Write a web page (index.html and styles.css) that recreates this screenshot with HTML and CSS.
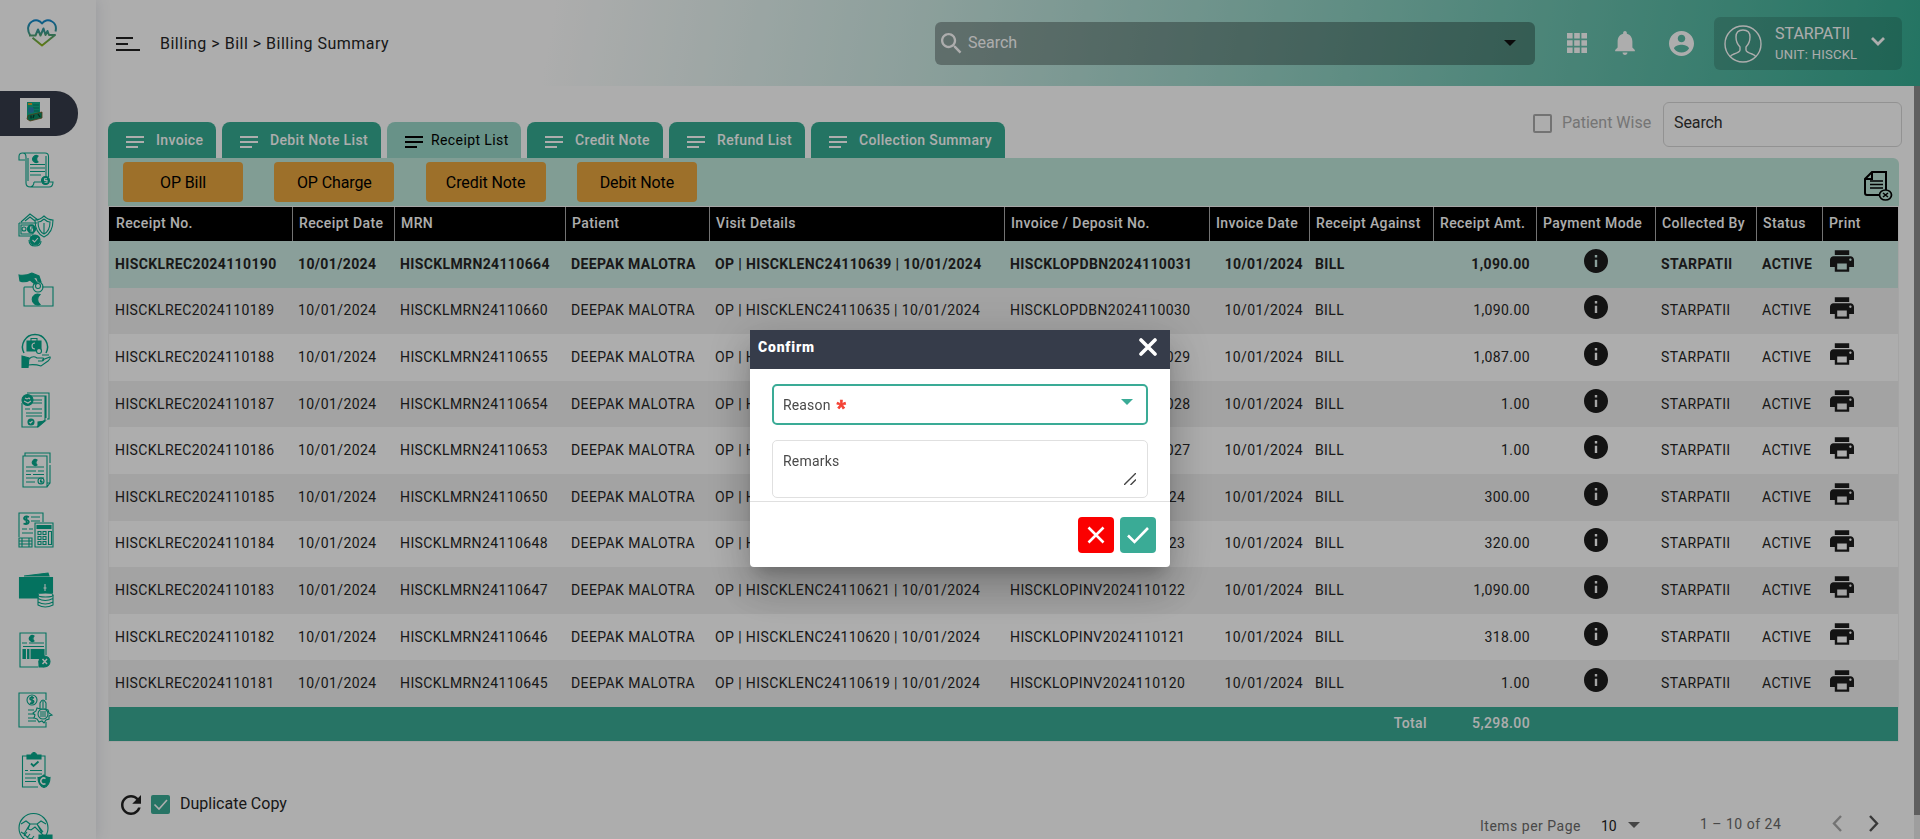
FILE: index.html
```html
<!DOCTYPE html>
<html lang="en">
<head>
<meta charset="utf-8">
<title>Billing Summary</title>
<link rel="stylesheet" href="styles.css">
</head>
<body>
<svg class="defs" aria-hidden="true">
  <defs>
    <linearGradient id="heart" x1="0" y1="0" x2="0" y2="1"><stop offset="0" stop-color="#1389cf"/><stop offset=".5" stop-color="#3f9c8c"/><stop offset="1" stop-color="#8fb51c"/></linearGradient>
  </defs>
  <symbol id="lines" viewBox="0 0 18 12"><path d="M0 0h18v2H0zM0 5h18v2H0zM0 10h12v2H0z"/></symbol>
  <symbol id="info" viewBox="2 2 20 20"><path d="M12 2C6.48 2 2 6.48 2 12s4.48 10 10 10 10-4.480 10-10S17.520 2 12 2zm1 15h-2v-6h2v6zm0-8h-2V7h2v2z"/></symbol>
  <symbol id="print" viewBox="2 3 20 18"><path d="M19 8H5c-1.660 0-3 1.340-3 3v6h4v4h12v-4h4v-6c0-1.660-1.340-3-3-3zm-3 11H8v-5h8v5zm3-7c-.55 0-1-.45-1-1s.45-1 1-1 1 .45 1 1-.45 1-1 1zm-1-9H6v4h12V3z"/></symbol>
</svg>

<aside class="sidebar">
  <svg class="logo" viewBox="0 0 30 28" fill="none" stroke="url(#heart)" stroke-width="2" stroke-linejoin="round"><path d="M3 16C0 11 .5 5 5 2.500 9 0 13 1.500 15 4.500 17 1.500 21 0 25 2.500c3.500 2 4.500 6 3.500 10M2 16.500h6.500l2.500-6 2.500 6 3-7 2 6.500 2-4 1.500 4H28L15 26.500 5.500 18.800"/></svg>
  <div class="side-active"><div class="side-tile">
    <svg viewBox="0 0 30 30"><path d="M7 4h13v16H7z" fill="#0fae8c"/><path d="M8 5h4v2H8z" fill="#d5a22c"/><path d="M13 7h6M13 10h6M14 13h5" stroke="#087c67"/><circle cx="11" cy="12" r="3" fill="#2a85b5"/><path d="M8 17.500L22 14v6l-12 3-3-2z" fill="#0a8b63" stroke="#77551f" stroke-width=".8"/><path d="M11 17.500v3M14 17l-1 3M18 16l2 3" stroke="#063f31" stroke-width="1.300"/></svg>
  </div></div>
  <nav class="side-nav">
    <svg viewBox="0 0 36 36"><path d="M7 8H1V4.500Q1 1 4.500 1H27q3.500 0 3.500 3.500V25M4.500 1Q8 1 8 5v26q0 4 4.500 4H31q4 0 4-5h-3M16 30H23M16 30q0 5-5 5M10 6v23M28 4v21"/><path d="M12 12.500h15M12 16h15M12 19.500h15M12 23h11"/><path class="f" d="M20 4a3.500 3.500 0 1 0 0 6 4 4 0 0 1 0-6z"/><circle class="f" cx="27.500" cy="28.500" r="4"/><path class="w" d="M29 26.800h-2.500v1.700H29v1.700h-2.500"/></svg>
    <svg viewBox="0 0 36 36"><path d="M1 11h18M1 11v13h12M3 13h12v9H3zM3 10l9-8 8 6M7 9l5-4 5 4"/><circle cx="6" cy="17" r="2"/><circle class="f" cx="13.500" cy="17" r="4"/><path class="w" d="M14.500 15h-2v2h2v2h-2"/><path d="M26 4q4 4 9 4 0 13-9 17-9-4-9-17 5 0 9-4zM26 7q3 3 6 3 0 9-6 12-6-3-6-12 3 0 6-3M26 11v11"/><circle class="f" cx="17" cy="28" r="5"/><path d="M11 28q0 6 6 6t6-5"/><path class="w" d="M14.500 28l2 2 3.500-4"/></svg>
    <svg viewBox="0 0 36 36"><path class="f" d="M1 3q7 1 13-2l7 3 2 6-3-1-1-3-4-1 4 6-2 1-5-4Q7 11 2 9z"/><path d="M15 15H6.500Q6 15 6 16v18h29V15H24"/><circle cx="20" cy="15" r="5"/><circle cx="20" cy="14" r="2.500"/><path class="f" d="M22 22.500a5.500 5.500 0 1 0 0 10 6.500 6.500 0 0 1 0-10z"/></svg>
    <svg viewBox="0 0 36 36"><path stroke-width="1.500" d="M6 21A12.500 12.500 0 1 1 28 21"/><path class="f" d="M9 9h14v10H9z"/><path d="M13 9V6.500h6V9"/><path class="w" d="M17 11a3 3 0 1 0 0 6"/><circle cx="21" cy="19" r="2.500" fill="#fff"/><path class="f" d="M4 24l7 2-1 10H4z"/><path d="M11 27q4-4 8-1h6q2 2-1 3h-4M24 28l8-3q1 1-2 4l-7 5q-6-2-13-1M24 23h7"/></svg>
    <svg viewBox="0 0 36 36"><path d="M9 1h22v26h-2M12 4h16v22M4 11v24h15l8-7V4M12 8h12M14 11h10M7 17h5M14 17h10M8 21h16M8 24h16"/><circle class="f" cx="9.500" cy="8" r="5.500"/><path class="w" d="M7 6l2 1 2-1 1 1M6 9l4 2 3-2"/><circle class="f" cx="13" cy="30" r="3"/><path class="w" d="M11.500 30l1 1 2-2"/><path class="f" d="M20 35v-5l7-1z"/></svg>
    <svg viewBox="0 0 36 36"><path d="M7 4V1h25v10M32 13v18h-3M5 4h24v31H5zM32 31l-3 4M8 15h18M8 19h10M20 19h6M8 22.500h5M15 22.500h11M8 26h18M8 30h9"/><path class="f" d="M19 8a3 3 0 1 0 0 5 3.500 3.500 0 0 1 0-5z"/><circle cx="23" cy="29" r="3"/><path d="M24 28h-1.500v1.500H24V31h-2"/></svg>
    <svg viewBox="0 0 36 36"><path d="M25 10V1H1v24M13 5h9M13 9h9M4 17h5M11 17h4M4 21h11M17 11h18v24H17zM1 26h13v9H1zM1 29h13M1 32h13M4 26v9M11 26v9"/><path stroke-width="1.800" d="M11 5q-4-1.500-5 1 0 2 3 2 3 1 1 3.500-2 1-4.500 0M8.500 3.500v9"/><path class="f" d="M19 13.500h14v3H19z"/><path d="M20 19.500h3v3h-3zM25 19.500h3v3h-3zM20 24.500h3v3h-3zM25 24.500h3v3h-3zM20 29.500h3v3h-3zM25 29.500h3v3h-3zM30.500 19.500h3v13h-3z"/></svg>
    <svg viewBox="0 0 36 36"><path class="f" d="M6 4L30 1l1 3zM1.500 5.500h33V21H20v5H1.500z"/><path class="w" d="M27 12v7M25.500 16h3"/><ellipse cx="27.500" cy="23" rx="7.500" ry="2" fill="#fff"/><path d="M20 23v10q7 4 15 0V23M20 26.500q7 4 15 0M20 30q7 4 15 0"/></svg>
    <svg viewBox="0 0 36 36"><path d="M28 23V1H2v34h18M4 11h5M11 11h15M5 14.500h21"/><path class="f" d="M5 17.500h21v3H5zM5 21.500h21v5H5z"/><path class="w" d="M8.500 17v10M12 17v10"/><path class="f" d="M16 4a3 3 0 1 0 0 5 3.500 3.500 0 0 1 0-5z"/><circle class="f" cx="26.500" cy="29.500" r="5.500"/><path class="w" stroke-width="1.500" d="M24.500 27l4.500 5M29 27l-4.500 5"/><path class="f" d="M21 30v5h4z"/></svg>
    <svg viewBox="0 0 36 36"><path d="M28 8V1H1v34h27v-5M10 18h6M10 22h6M10 26h6M10 29h8"/><circle cx="14" cy="8" r="5"/><path stroke-width="1.500" d="M16 6q-4-1.500-4 .5 0 1.500 2 1.500 3 1 1 3-1.500.5-3 0M14 4v8"/><path d="M22 17v-6q3-6 6 0v6M25 9v7M22 17l-3-1-1 3-3 2 2 2-1 3 3 1 2 3 3-1 2 2 2-3 3-1v-3l3-1-3-2-1-3-3-1z"/><circle cx="25" cy="22" r="5"/><path d="M22 20h6M22 22h6M22 24h6"/></svg>
    <svg viewBox="0 0 36 36"><path d="M11 4H4.500v31H20M21 4h6v19M7 18.500h3M12 18.500h12M7 22h17M7 26h11M7 29.500h11"/><path class="f" d="M9 3h4q3-5 6 0h4v4H9z"/><path stroke-width="1.800" d="M13 11.500l2.500 2.500 5-4.500"/><path class="f" d="M26 23q3 3 6 2.500 0 8-6 10-6-2-6-10 3 .5 6-2.500z"/><path class="w" stroke-width="1.500" d="M27.500 26.500a3 3 0 1 0 0 5"/></svg>
    <svg viewBox="0 0 36 36"><circle cx="15.500" cy="16" r="14.500"/><path d="M3 12l5-3 4 3-6 10-3-2M28 12l-5-3-4 3 6 8M12 12l7 0 5 9M12 12l-2 5 3 1 4-3 8 8-2 2M5 21l5 5 4 1 5 2 3-3M9 20l-3 4M12 22l-3 4M16 24l-3 4"/><path class="f" d="M21 23h13v9H21z"/></svg>
  </nav>
</aside>

<div class="main">
  <header class="topbar">
    <svg class="menu" viewBox="0 0 24 14"><path d="M0 0h17v2H0zM0 6h12v2H0zM0 12h24v2H0z"/></svg>
    <div class="crumbs">Billing &gt; Bill &gt; Billing Summary</div>
    <div class="global-search">
      <svg class="mag" viewBox="3 3 18 18"><path d="M15.500 14h-.79l-.28-.27C15.410 12.590 16 11.110 16 9.500 16 5.910 13.090 3 9.500 3S3 5.910 3 9.500 5.910 16 9.500 16c1.610 0 3.090-.59 4.230-1.570l.27.28v.79l5 4.990L20.490 19l-4.990-5zm-6 0C7.010 14 5 11.990 5 9.500S7.010 5 9.500 5 14 7.010 14 9.500 11.990 14 9.500 14z"/></svg>
      <span>Search</span><i class="caret"></i>
    </div>
    <svg class="apps" viewBox="0 0 20 20"><path d="M0 0h5.600v5.600H0zM7.200 0h5.600v5.600H7.200zM14.400 0H20v5.600h-5.600zM0 7.200h5.600v5.600H0zM7.200 7.200h5.600v5.600H7.200zM14.400 7.200H20v5.600h-5.600zM0 14.400h5.600V20H0zM7.200 14.400h5.600V20H7.200zM14.400 14.400H20V20h-5.600z"/></svg>
    <svg class="bell" viewBox="4 2.500 16 19.500"><path d="M12 22c1.100 0 2-.9 2-2h-4c0 1.100.89 2 2 2zm6-6v-5c0-3.070-1.640-5.640-4.500-6.320V4c0-.83-.67-1.500-1.500-1.500s-1.500.67-1.500 1.500v.68C7.630 5.360 6 7.920 6 11v5l-2 2v1h16v-1l-2-2z"/></svg>
    <svg class="account" viewBox="2 2 20 20"><path d="M12 2C6.480 2 2 6.480 2 12s4.480 10 10 10 10-4.480 10-10S17.520 2 12 2zm0 3c1.660 0 3 1.340 3 3s-1.340 3-3 3-3-1.340-3-3 1.340-3 3-3zm0 14.200c-2.500 0-4.710-1.280-6-3.220.03-1.990 4-3.080 6-3.080 1.990 0 5.970 1.090 6 3.080-1.290 1.940-3.500 3.220-6 3.220z"/></svg>
    <div class="user">
      <svg class="avatar" viewBox="0 0 38 38"><circle cx="19" cy="19" r="18"/><path d="M6 32q1-2 4-3 6-2 6-4v-3q-4-4-4-10 0-7 7-7t7 7q0 6-4 10v3q0 2 6 4 3 1 4 3"/></svg>
      <div class="user-text"><div class="user-name">STARPATIl</div><div class="user-unit">UNIT: HISCKL</div></div>
      <svg class="chev" viewBox="0 0 14 9"><path d="M1 1l6 6 6-6"/></svg>
    </div>
  </header>

  <div class="body">
    <div class="content">
      <div class="tab-row">
        <div class="tabs">
          <div class="tab w1"><svg><use href="#lines"/></svg>Invoice</div>
          <div class="tab w2"><svg><use href="#lines"/></svg>Debit Note List</div>
          <div class="tab w3 active"><svg><use href="#lines"/></svg>Receipt List</div>
          <div class="tab w4"><svg><use href="#lines"/></svg>Credit Note</div>
          <div class="tab w5"><svg><use href="#lines"/></svg>Refund List</div>
          <div class="tab w6"><svg><use href="#lines"/></svg>Collection Summary</div>
        </div>
        <div class="filter"><span class="box"></span><span class="patient">Patient Wise</span><div class="field">Search</div></div>
      </div>
      <div class="toolbar">
        <div class="btn">OP Bill</div><div class="btn">OP Charge</div><div class="btn">Credit Note</div><div class="btn">Debit Note</div>
        <svg class="report" viewBox="0 0 29 30"><path stroke-width="2" d="M8 1h14v18M16 24H3q-2 0-2-2V8l7-7v7H1"/><path stroke-width="1.600" d="M6 10h13M6 13.500h13M6 17h13"/><ellipse cx="21.500" cy="24" rx="6" ry="5" stroke-width="1.700"/><path stroke-width="1.600" d="M19 22l5 4M24 22l-5 4"/></svg>
      </div>
      <table class="grid">
        <colgroup><col class="c1"><col class="c2"><col class="c3"><col class="c4"><col class="c5"><col class="c6"><col class="c7"><col class="c8"><col class="c9"><col class="c10"><col class="c11"><col class="c12"><col class="c13"></colgroup>
        <thead><tr><th>Receipt No.</th><th>Receipt Date</th><th>MRN</th><th>Patient</th><th>Visit Details</th><th>Invoice / Deposit No.</th><th>Invoice Date</th><th>Receipt Against</th><th>Receipt Amt.</th><th>Payment Mode</th><th>Collected By</th><th>Status</th><th>Print</th></tr></thead>
        <tbody>
          <tr class="selected"><td>HISCKLREC2024110190</td><td>10/01/2024</td><td>HISCKLMRN24110664</td><td>DEEPAK MALOTRA</td><td>OP | HISCKLENC24110639 | 10/01/2024</td><td>HISCKLOPDBN2024110031</td><td class="r">10/01/2024</td><td>BILL</td><td class="r">1,090.00</td><td class="mid"><svg class="info"><use href="#info"/></svg></td><td>STARPATIl</td><td>ACTIVE</td><td><svg class="print"><use href="#print"/></svg></td></tr>
          <tr><td>HISCKLREC2024110189</td><td>10/01/2024</td><td>HISCKLMRN24110660</td><td>DEEPAK MALOTRA</td><td>OP | HISCKLENC24110635 | 10/01/2024</td><td>HISCKLOPDBN2024110030</td><td class="r">10/01/2024</td><td>BILL</td><td class="r">1,090.00</td><td class="mid"><svg class="info"><use href="#info"/></svg></td><td>STARPATIl</td><td>ACTIVE</td><td><svg class="print"><use href="#print"/></svg></td></tr>
          <tr><td>HISCKLREC2024110188</td><td>10/01/2024</td><td>HISCKLMRN24110655</td><td>DEEPAK MALOTRA</td><td>OP | HISCKLENC24110630 | 10/01/2024</td><td>HISCKLOPDBN2024110029</td><td class="r">10/01/2024</td><td>BILL</td><td class="r">1,087.00</td><td class="mid"><svg class="info"><use href="#info"/></svg></td><td>STARPATIl</td><td>ACTIVE</td><td><svg class="print"><use href="#print"/></svg></td></tr>
          <tr><td>HISCKLREC2024110187</td><td>10/01/2024</td><td>HISCKLMRN24110654</td><td>DEEPAK MALOTRA</td><td>OP | HISCKLENC24110629 | 10/01/2024</td><td>HISCKLOPDBN2024110028</td><td class="r">10/01/2024</td><td>BILL</td><td class="r">1.00</td><td class="mid"><svg class="info"><use href="#info"/></svg></td><td>STARPATIl</td><td>ACTIVE</td><td><svg class="print"><use href="#print"/></svg></td></tr>
          <tr><td>HISCKLREC2024110186</td><td>10/01/2024</td><td>HISCKLMRN24110653</td><td>DEEPAK MALOTRA</td><td>OP | HISCKLENC24110628 | 10/01/2024</td><td>HISCKLOPDBN2024110027</td><td class="r">10/01/2024</td><td>BILL</td><td class="r">1.00</td><td class="mid"><svg class="info"><use href="#info"/></svg></td><td>STARPATIl</td><td>ACTIVE</td><td><svg class="print"><use href="#print"/></svg></td></tr>
          <tr><td>HISCKLREC2024110185</td><td>10/01/2024</td><td>HISCKLMRN24110650</td><td>DEEPAK MALOTRA</td><td>OP | HISCKLENC24110625 | 10/01/2024</td><td>HISCKLOPINV2024110124</td><td class="r">10/01/2024</td><td>BILL</td><td class="r">300.00</td><td class="mid"><svg class="info"><use href="#info"/></svg></td><td>STARPATIl</td><td>ACTIVE</td><td><svg class="print"><use href="#print"/></svg></td></tr>
          <tr><td>HISCKLREC2024110184</td><td>10/01/2024</td><td>HISCKLMRN24110648</td><td>DEEPAK MALOTRA</td><td>OP | HISCKLENC24110622 | 10/01/2024</td><td>HISCKLOPINV2024110123</td><td class="r">10/01/2024</td><td>BILL</td><td class="r">320.00</td><td class="mid"><svg class="info"><use href="#info"/></svg></td><td>STARPATIl</td><td>ACTIVE</td><td><svg class="print"><use href="#print"/></svg></td></tr>
          <tr><td>HISCKLREC2024110183</td><td>10/01/2024</td><td>HISCKLMRN24110647</td><td>DEEPAK MALOTRA</td><td>OP | HISCKLENC24110621 | 10/01/2024</td><td>HISCKLOPINV2024110122</td><td class="r">10/01/2024</td><td>BILL</td><td class="r">1,090.00</td><td class="mid"><svg class="info"><use href="#info"/></svg></td><td>STARPATIl</td><td>ACTIVE</td><td><svg class="print"><use href="#print"/></svg></td></tr>
          <tr><td>HISCKLREC2024110182</td><td>10/01/2024</td><td>HISCKLMRN24110646</td><td>DEEPAK MALOTRA</td><td>OP | HISCKLENC24110620 | 10/01/2024</td><td>HISCKLOPINV2024110121</td><td class="r">10/01/2024</td><td>BILL</td><td class="r">318.00</td><td class="mid"><svg class="info"><use href="#info"/></svg></td><td>STARPATIl</td><td>ACTIVE</td><td><svg class="print"><use href="#print"/></svg></td></tr>
          <tr><td>HISCKLREC2024110181</td><td>10/01/2024</td><td>HISCKLMRN24110645</td><td>DEEPAK MALOTRA</td><td>OP | HISCKLENC24110619 | 10/01/2024</td><td>HISCKLOPINV2024110120</td><td class="r">10/01/2024</td><td>BILL</td><td class="r">1.00</td><td class="mid"><svg class="info"><use href="#info"/></svg></td><td>STARPATIl</td><td>ACTIVE</td><td><svg class="print"><use href="#print"/></svg></td></tr>
        </tbody>
        <tfoot><tr><td colspan="7"></td><td class="r">Total</td><td class="r">5,298.00</td><td colspan="4"></td></tr></tfoot>
      </table>
      <div class="footer">
        <div class="copy">
          <svg class="refresh" viewBox="4 4 16 16"><path d="M17.650 6.350C16.200 4.900 14.210 4 12 4c-4.420 0-7.990 3.580-7.990 8s3.570 8 7.990 8c3.730 0 6.840-2.550 7.730-6h-2.080c-.82 2.330-3.040 4-5.650 4-3.310 0-6-2.690-6-6s2.690-6 6-6c1.660 0 3.140.69 4.220 1.780L13 11h7V4l-2.350 2.350z"/></svg>
          <svg class="checked" viewBox="0 0 19 19"><rect width="19" height="19" rx="2"/><path d="M3.500 9.500l4.500 4.500 8-9"/></svg>
          <span>Duplicate Copy</span>
        </div>
        <div class="pager">
          <span class="ipp">Items per Page</span><span class="ten">10</span><i class="caret grey"></i><span class="range">1 – 10 of 24</span>
          <svg class="prev" viewBox="0 0 10 17"><path d="M9 1L2 8.500 9 16"/></svg><svg class="next" viewBox="0 0 10 17"><path d="M1 1l7 7.500L1 16"/></svg>
        </div>
      </div>
    </div>
    <div class="scroll"><div class="thumb"></div></div>
  </div>
</div>

<div class="backdrop">
  <div class="modal">
    <div class="modal-head"><span>Confirm</span><svg viewBox="0 0 18 18"><path d="M2 2l14 14M16 2L2 16"/></svg></div>
    <div class="modal-body">
      <div class="reason"><span>Reason</span><b>*</b><i class="caret green"></i></div>
      <div class="remarks"><span>Remarks</span><svg viewBox="0 0 12 12"><path d="M0 12L12 0M6.500 12L12 6.500"/></svg></div>
    </div>
    <div class="modal-foot">
      <div class="act no"><svg viewBox="0 0 18 18"><path d="M1.500 1.500l15 15M16.500 1.500l-15 15"/></svg></div>
      <div class="act yes"><svg viewBox="0 0 22 18"><path d="M1 9.500l6.500 6.500L21 2"/></svg></div>
    </div>
  </div>
</div>
</body>
</html>
```
FILE: styles.css
```css
* { box-sizing: border-box; }
body { margin: 0; width: 1920px; height: 839px; overflow: hidden; display: flex; background: #fff; font-family: Roboto, "Liberation Sans", sans-serif; font-size: 14px; color: #262626; }
svg { display: block; flex: none; }
.defs { position: absolute; width: 0; height: 0; }

.sidebar { width: 96px; flex: none; height: 839px; overflow: hidden; z-index: 1; background: #fff; box-shadow: 0 0 14px rgba(60, 70, 110, .17); }
.logo { width: 30px; height: 28px; margin: 19px 0 44px 27px; }
.side-active { width: 78px; height: 45px; background: #363c4a; border-radius: 0 22px 22px 0; padding: 7px 0 0 20px; }
.side-tile { width: 30px; height: 30px; background: #fff; }
.side-nav { display: flex; flex-direction: column; gap: 24px; padding: 16px 0 0 18px; }
.side-nav svg { width: 36px; height: 36px; fill: none; stroke: #06a98d; stroke-width: 1.1; }
.side-nav .f { fill: #06a98d; }
.side-nav .w { stroke: #fff; }

.main { width: 1824px; flex: none; display: flex; flex-direction: column; }
.topbar { height: 86px; flex: none; display: flex; align-items: center; padding-right: 18px; background: linear-gradient(100deg, #fff 25%, #cceae4 46%, #35ac92 100%); }
.topbar svg { fill: #fff; }
.topbar .menu { width: 24px; height: 14px; margin-left: 20px; fill: #212121; margin-top: 2px; }
.crumbs { margin-left: 20px; width: 775px; font-size: 16px; letter-spacing: .5px; }
.global-search { width: 600px; height: 43px; margin-top: 1px; border-radius: 6px; background: rgba(0, 0, 0, .3); color: #fff; font-size: 16px; display: flex; align-items: center; padding: 0 19px 2px 6px; }
.topbar .mag { width: 21px; height: 21px; margin: 1px 6px 0 0; }
.caret { width: 0; height: 0; border: 6px solid transparent; border-top-color: #111; border-bottom: 0; margin: 1px 0 0 auto; }
.topbar .apps { width: 20px; height: 20px; margin-left: 32px; }
.topbar .bell { width: 20px; height: 24px; margin-left: 28px; }
.topbar .account { width: 25px; height: 25px; margin: 0 20px 0 34px; }
.user { width: 188px; height: 53px; border-radius: 6px; background: rgba(0, 0, 0, .15); color: #fff; display: flex; align-items: center; padding-left: 10px; margin-top: 1px; }
.topbar .avatar { width: 38px; height: 38px; fill: none; stroke: #fff; stroke-width: 1.4; }
.user-text { width: 96px; margin-left: 13px; }
.user-name { font-size: 16px; line-height: 22px; }
.user-unit { font-size: 13px; line-height: 20px; white-space: nowrap; letter-spacing: .25px; }
.topbar .chev { width: 14px; height: 9px; margin: -5px 0 0 0; fill: none; stroke: #fff; stroke-width: 2.8; }

.body { display: flex; height: 753px; }
.content { width: 1818px; padding: 0 0 0 12px; }
.scroll { width: 6px; background: #e9e9e9; }
.thumb { height: 729px; background: #8c8c8c; }
.tab-row { height: 72px; width: 1794px; display: flex; justify-content: space-between; }
.tabs { display: flex; align-items: flex-end; gap: 6px; }
.tab { height: 36px; border-radius: 8px 8px 0 0; background: #35ac92; color: #fff; font-weight: 500; letter-spacing: .35px; display: flex; align-items: center; padding-left: 18px; white-space: nowrap; }
.tab svg { width: 18px; height: 12px; fill: currentColor; margin: 4px 12px 0 0; }
.tab.active { background: #9ad8c9; color: #000; letter-spacing: .4px; font-weight: 400; }
.tab.active svg { margin-right: 8px; }
.w1 { width: 108px; } .w2 { width: 159px; } .w3 { width: 134px; } .w4 { width: 136px; } .w5 { width: 136px; } .w6 { width: 194px; }
.filter { display: flex; font-size: 16px; padding-top: 16px; }
.box { width: 19px; height: 19px; border: 2px solid #aaa; border-radius: 2px; margin: 12px 10px 0 0; }
.patient { width: 101px; color: #adadad; line-height: 41px; letter-spacing: 0; }
.field { width: 239px; height: 45px; border: 1px solid #d8d8d8; border-radius: 6px; padding-left: 10px; line-height: 39px; letter-spacing: -.1px; color: #333; }
.toolbar { width: 1791px; height: 48px; background: #bfe7da; border-radius: 0 6px 0 0; display: flex; align-items: center; gap: 31.3px; padding: 0 6px 0 15px; }
.btn { width: 120px; height: 40px; background: #e7a53f; border-radius: 4px; text-align: center; line-height: 41px; font-size: 16px; letter-spacing: -.1px; color: #000; }
.report { width: 29px; height: 30px; margin: 7px 0 0 auto; fill: none; stroke: #000; }

.grid { width: 1789px; margin: 1px 0 0 1px; table-layout: fixed; border-collapse: separate; border-spacing: 0; box-shadow: 0 0 0 1px #f3f3f3; letter-spacing: .4px; }
.c1 { width: 183px; } .c2 { width: 102px; } .c3 { width: 171px; } .c4 { width: 144px; } .c5 { width: 295px; } .c6 { width: 205px; } .c7 { width: 100px; } .c8 { width: 124px; } .c9 { width: 103px; } .c10 { width: 119px; } .c11 { width: 101px; } .c12 { width: 66px; } .c13 { width: 76px; }
th { height: 34px; background: #000; color: #fff; font-weight: 500; text-align: left; padding: 0 0 2px 6px; border-left: 1px solid #aaa; white-space: nowrap; }
th:first-child { border-color: #000; }
td { height: 46.6px; padding: 0 6px 1px 6px; white-space: nowrap; }
tbody tr:nth-child(even) { background: #f0f0f0; }
tbody tr.selected { background: #cceae4; font-weight: 700; letter-spacing: .37px; }
.r { text-align: right; }
.info { width: 24px; height: 24px; margin: -6px auto 0; fill: #1c1c1c; }
.print { width: 24px; height: 22px; margin: -5px 0 0 2px; fill: #1c1c1c; }
tfoot td { height: 34px; background: #3aab96; color: #fff; font-weight: 500; padding-bottom: 2px; }

.footer { display: flex; justify-content: space-between; width: 1790px; }
.copy { display: flex; align-items: center; height: 20px; margin-top: 54px; padding-left: 13px; font-size: 16px; }
.refresh { width: 20px; height: 20px; fill: #212121; margin: 1px 10px 0 0; }
.checked { width: 19px; height: 19px; margin-right: 10px; }
.checked rect { fill: #3aab96; }
.checked path { fill: none; stroke: #fff; stroke-width: 1.6; }
.copy span { margin-top: -3px; }
.pager { display: flex; align-items: center; height: 24px; margin: 71px 19px 0 0; color: #6b6b6b; letter-spacing: .5px; }
.ipp { width: 121px; padding-top: 4px; }
.ten { width: 27px; color: #212121; padding-top: 4px; letter-spacing: 0; }
.caret.grey { border-top-color: #666; margin: 3px 60px 0 0; }
.range { width: 132px; }
.prev, .next { width: 10px; height: 17px; fill: none; stroke: #aaa; stroke-width: 2.4; }
.next { margin-left: 27px; stroke: #555; }

.backdrop { position: fixed; inset: 0; z-index: 5; background: rgba(0, 0, 0, .32); display: flex; justify-content: center; align-items: flex-start; padding-top: 330px; }
.modal { width: 420px; height: 237px; background: #fff; border-radius: 0 0 4px 4px; box-shadow: 0 11px 15px -7px rgba(0,0,0,.2), 0 24px 38px 3px rgba(0,0,0,.14), 0 9px 46px 8px rgba(0,0,0,.12); }
.modal-head { height: 39px; background: #363c4a; color: #fff; font-weight: 900; display: flex; justify-content: space-between; align-items: center; padding: 0 13px 5px 8px; letter-spacing: .8px; }
.modal-head svg { width: 18px; height: 18px; fill: none; stroke: #fff; stroke-width: 3.6; stroke-linecap: round; }
.modal-body { height: 133px; padding: 15px 22px 0; border-bottom: 1px solid #e0e0e0; color: #4a4a4a; }
.reason { height: 41px; border: 2px solid #3aab96; border-radius: 5px; display: flex; align-items: center; padding: 1px 13px 0 9px; letter-spacing: .15px; }
.reason b { color: #f44336; font-size: 20px; font-weight: 900; -webkit-text-stroke: .7px #f44336; margin: 6px 0 0 6px; line-height: 20px; }
.caret.green { border-top-color: #3aab96; margin-top: -7px; }
.remarks { height: 58px; margin-top: 15px; border: 1px solid #e0e0e0; border-radius: 5px; padding: 12px 11px 12px 10px; display: flex; justify-content: space-between; letter-spacing: .2px; }
.remarks svg { width: 12px; height: 12px; align-self: flex-end; fill: none; stroke: #444; stroke-width: 1.4; }
.modal-foot { display: flex; justify-content: flex-end; gap: 6px; padding: 15px 14px 0 0; }
.act { width: 36px; height: 36px; border-radius: 4px; display: flex; align-items: center; justify-content: center; }
.act svg { fill: none; stroke: #fff; stroke-width: 2.6; height: 18px; }
.no { background: #fb0000; }
.yes { background: #3aab96; }
```
